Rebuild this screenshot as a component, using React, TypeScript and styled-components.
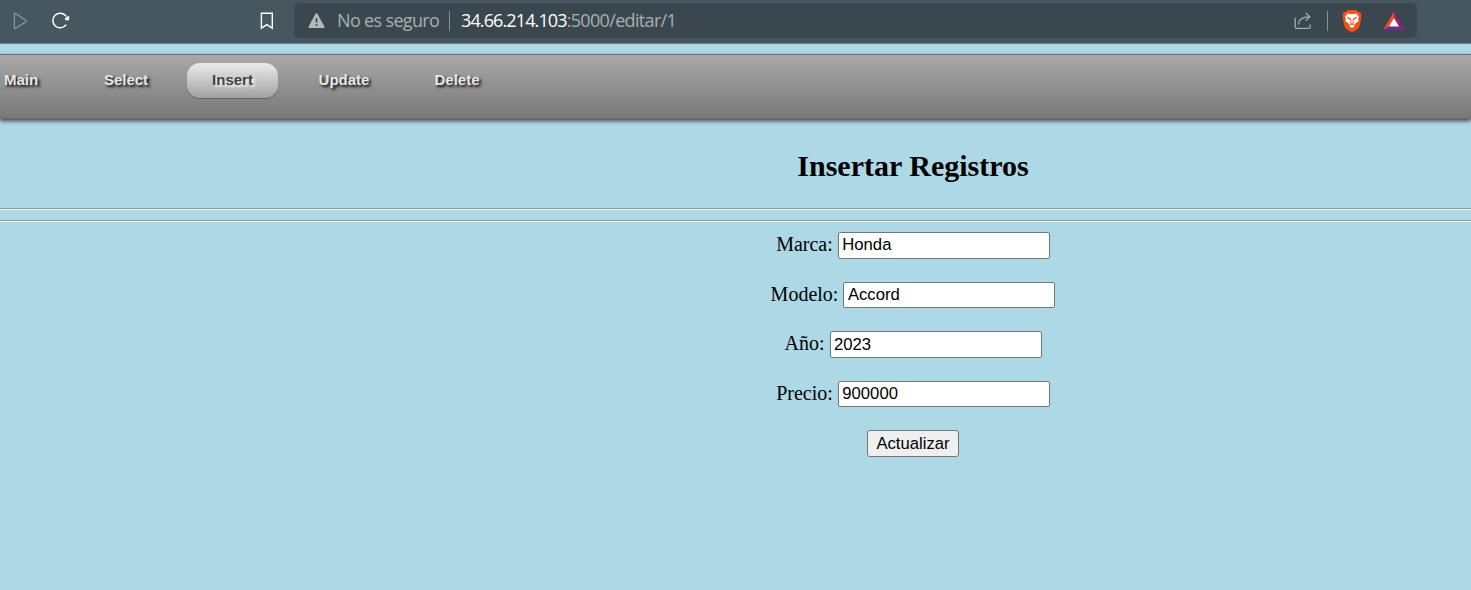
import React from "react";
import styled, { createGlobalStyle, css } from "styled-components";

const GlobalStyle = createGlobalStyle`
  * { box-sizing: border-box; }
  html, body { margin: 0; padding: 0; background: #add8e6; }
  body { height: 590px; overflow: hidden; }
`;

const Screen = styled.div`
  width: 100%;
  height: 590px;
  overflow: hidden;
  background: #add8e6;
`;

const Toolbar = styled.header`
  display: flex;
  align-items: flex-start;
  height: 44px;
  padding: 3px 54px 0 0;
  background: #46575f;
  border-bottom: 1px solid #6f7f86;
`;

const ToolbarButtons = styled.div`
  display: flex;
  align-items: center;
  width: 294px;
  height: 35px;
  padding-left: 12px;
`;

const IconSlot = styled.span<{ $left?: number }>`
  display: flex;
  margin-left: ${(p) => p.$left ?? 0}px;
`;

const AddressBar = styled.div`
  display: flex;
  align-items: center;
  flex: 1;
  height: 35px;
  padding: 0 12px 0 13px;
  border-radius: 5px;
  background: #3b474e;
  font: 18px/35px "Open Sans", "Noto Sans", sans-serif;
`;

const Security = styled.span`
  width: 102px;
  margin-left: 12px;
  color: #a9afb2;
  letter-spacing: -0.66px;
  white-space: nowrap;
`;

const Divider = styled.i<{ $before: number; $after: number }>`
  width: 1px;
  height: 20px;
  margin: 0 ${(p) => p.$after}px 0 ${(p) => p.$before}px;
  background: #8b9296;
`;

const Url = styled.span`
  flex: 1;
  color: #a9afb2;
  letter-spacing: -0.67px;
  white-space: nowrap;
`;

const Host = styled.span`
  color: #fff;
  letter-spacing: -0.88px;
`;

const Nav = styled.nav`
  display: flex;
  align-items: flex-start;
  height: 65px;
  margin-top: 10px;
  padding-top: 8px;
  border-top: 1px solid #6b6b6b;
  border-bottom: 1px solid #6a6a6a;
  background: linear-gradient(#a9a9a9, #787878);
  box-shadow: 0 2px 4px #444;
`;

const activeTab = css`
  color: #444;
  background: linear-gradient(#ebebeb, #a1a1a1);
  box-shadow: 0 1px 1px rgba(0, 0, 0, 0.3);
  text-shadow: 2px 2px 3px #fff;
`;

const Tab = styled.a<{ $width: number; $active?: boolean }>`
  width: ${(p) => p.$width}px;
  height: 35px;
  border-radius: 13px;
  color: #e7e5e5;
  font: bold 15px/34px "Liberation Sans", Arial, sans-serif;
  text-align: center;
  text-decoration: none;
  text-shadow: 2px 2px 3px #000;
  ${(p) => p.$active && activeTab}
`;

const TabGroup = styled.div`
  display: flex;
  gap: 16px;
  margin-left: -23px;
`;

/* The page is wider than the window, so its centre lies right of the middle. */
const Content = styled.main`
  width: 1826px;
  font-family: "Liberation Serif", "Times New Roman", serif;
  color: #000;
`;

const Title = styled.h2`
  height: 34px;
  margin: 30px 0 25px;
  font-size: 30px;
  line-height: 34px;
  text-align: center;
`;

const Rule = styled.hr`
  height: 2px;
  margin: 0 0 10px;
  border: 0;
  border-top: 1px solid #9a9a9a;
  background: #eee;
`;

const Form = styled.form`
  display: flex;
  flex-direction: column;
  align-items: center;
  gap: 22.94px;
`;

const Field = styled.label`
  display: flex;
  align-items: center;
  gap: 5px;
  height: 26.66px;
  font-size: 20px;
  line-height: 23px;
`;

const FieldName = styled.span`
  margin-top: -1.7px;
`;

const Input = styled.input`
  width: 212px;
  height: 26.66px;
  padding: 0 3.5px;
  border: 1px solid #767676;
  border-radius: 2px;
  outline: none;
  background: #fff;
  color: #000;
  font: 16.67px "Liberation Sans", Arial, sans-serif;
`;

const Submit = styled.button`
  width: 92px;
  height: 26.66px;
  padding: 0;
  border: 1px solid #767676;
  border-radius: 3px;
  background: #efefef;
  color: #000;
  font: 16.67px "Liberation Sans", Arial, sans-serif;
`;

const PlayIcon = () => (
  <svg width="16" height="18" viewBox="0 0 16 18" fill="none" stroke="#8c989d" strokeWidth="1.3" strokeLinejoin="round">
    <path d="M2.4 2.2Q2.4 1 3.6 1.5L14 8.2Q14.8 9 14 9.7L3.7 16.3Q2.4 16.8 2.4 15.6Z" />
  </svg>
);

const ReloadIcon = () => (
  <svg width="18" height="18" viewBox="0 0 18 18" fill="none" stroke="#fff" strokeWidth="1.5">
    <path d="M14.2 12.6A7.3 7.3 0 1 1 14.2 4.4" />
    <path d="M17.1 3.8V8.2H13.2Q12.2 6.6 14 5.2Z" fill="#fff" stroke="none" />
  </svg>
);

const BookmarkIcon = () => (
  <svg width="14" height="18" viewBox="0 0 14 18" fill="none" stroke="#fff" strokeWidth="1.4">
    <path d="M1.4 1.2H12.3V16.2L6.8 12.6L1.4 16.2Z" />
  </svg>
);

const WarningIcon = () => (
  <svg width="18" height="16" viewBox="0 0 18 16">
    <path d="M9.5 1.4L16.4 14H2.6Z" fill="#b3b8bb" stroke="#b3b8bb" strokeWidth="2.2" strokeLinejoin="round" />
    <path d="M9.5 5V9.6M9.5 11V12.7" stroke="#3b474e" strokeWidth="1.6" />
  </svg>
);

const ShareIcon = () => (
  <svg width="18" height="18" viewBox="0 0 18 18" fill="none" stroke="#a5acaf" strokeWidth="1.3">
    <path d="M1.2 5.8V14.8Q1.2 16.4 2.8 16.4H14.6Q16.2 16.4 16.2 14.8V12.4" />
    <path d="M4.7 12.8Q4.5 4.8 15.5 4.8M11.8 1L15.8 4.8L11.8 8.6" />
  </svg>
);

const LionIcon = () => (
  <svg width="20" height="24" viewBox="0 0 20 24">
    <path d="M6 1H14L16 3L18 3L19.5 6L18.8 8L19.2 10L17.2 18Q16.7 19.4 15 20.5L10 23.4L5 20.5Q3.3 19.4 2.8 18L.8 10L1.2 8L.5 6L2 3L4 3Z" fill="#fb5014" />
    <path d="M6 4.5L10 5.2L14 4.5L17 7.5L16 10L16.6 12L13.4 14.6L12.6 15.8L13 17L10 19L7 17L7.4 15.8L6.6 14.6L3.4 12L4 10L3 7.5Z" fill="#fff" />
    <path d="M5 8L8.6 9L8.2 10.6L6 10ZM15 8L11.4 9L11.8 10.6L14 10Z" fill="#fb5014" />
    <path d="M8.8 9.8L9 12L8 13.8L10 15L12 13.8L11 12L11.2 9.8M7 16.2L10 15.2L13 16.2" fill="none" stroke="#fb5014" strokeWidth=".9" />
  </svg>
);

const TriangleIcon = () => (
  <svg width="22" height="20" viewBox="0 0 22 20">
    <path d="M11 .7L0 19.3L6 15.4L11 7Z" fill="#ff4724" />
    <path d="M11 .7L22 19.3L16 15.4L11 7Z" fill="#9e1f63" />
    <path d="M0 19.3H22L16 15.4H6Z" fill="#662d91" />
    <path d="M11 7L16 15.4H6Z" fill="#fff" />
  </svg>
);

const links = [
  { name: "Main", width: 88 },
  { name: "Select", width: 90 },
  { name: "Insert", width: 91, active: true },
  { name: "Update", width: 100 },
  { name: "Delete", width: 94 },
];

const fields = [
  { name: "Marca", value: "Honda" },
  { name: "Modelo", value: "Accord" },
  { name: "Año", value: "2023" },
  { name: "Precio", value: "900000" },
];

export default function App() {
  return (
    <Screen>
      <GlobalStyle />
      <Toolbar>
        <ToolbarButtons>
          <IconSlot><PlayIcon /></IconSlot>
          <IconSlot $left={24}><ReloadIcon /></IconSlot>
          <IconSlot $left={190}><BookmarkIcon /></IconSlot>
        </ToolbarButtons>
        <AddressBar>
          <WarningIcon />
          <Security>No es seguro</Security>
          <Divider $before={10} $after={11} />
          <Url><Host>34.66.214.103</Host>:5000/editar/1</Url>
          <ShareIcon />
          <Divider $before={15} $after={14} />
          <LionIcon />
          <IconSlot $left={21}><TriangleIcon /></IconSlot>
        </AddressBar>
      </Toolbar>
      <Nav>
        <TabGroup>
          {links.map((link) => (
            <Tab key={link.name} $width={link.width} $active={link.active}>{link.name}</Tab>
          ))}
        </TabGroup>
      </Nav>
      <Content>
        <Title>Insertar Registros</Title>
        <Rule />
        <Rule />
        <Form>
          {fields.map((field) => (
            <Field key={field.name}>
              <FieldName>{field.name}:</FieldName>
              <Input defaultValue={field.value} />
            </Field>
          ))}
          <Submit type="button">Actualizar</Submit>
        </Form>
      </Content>
    </Screen>
  );
}
